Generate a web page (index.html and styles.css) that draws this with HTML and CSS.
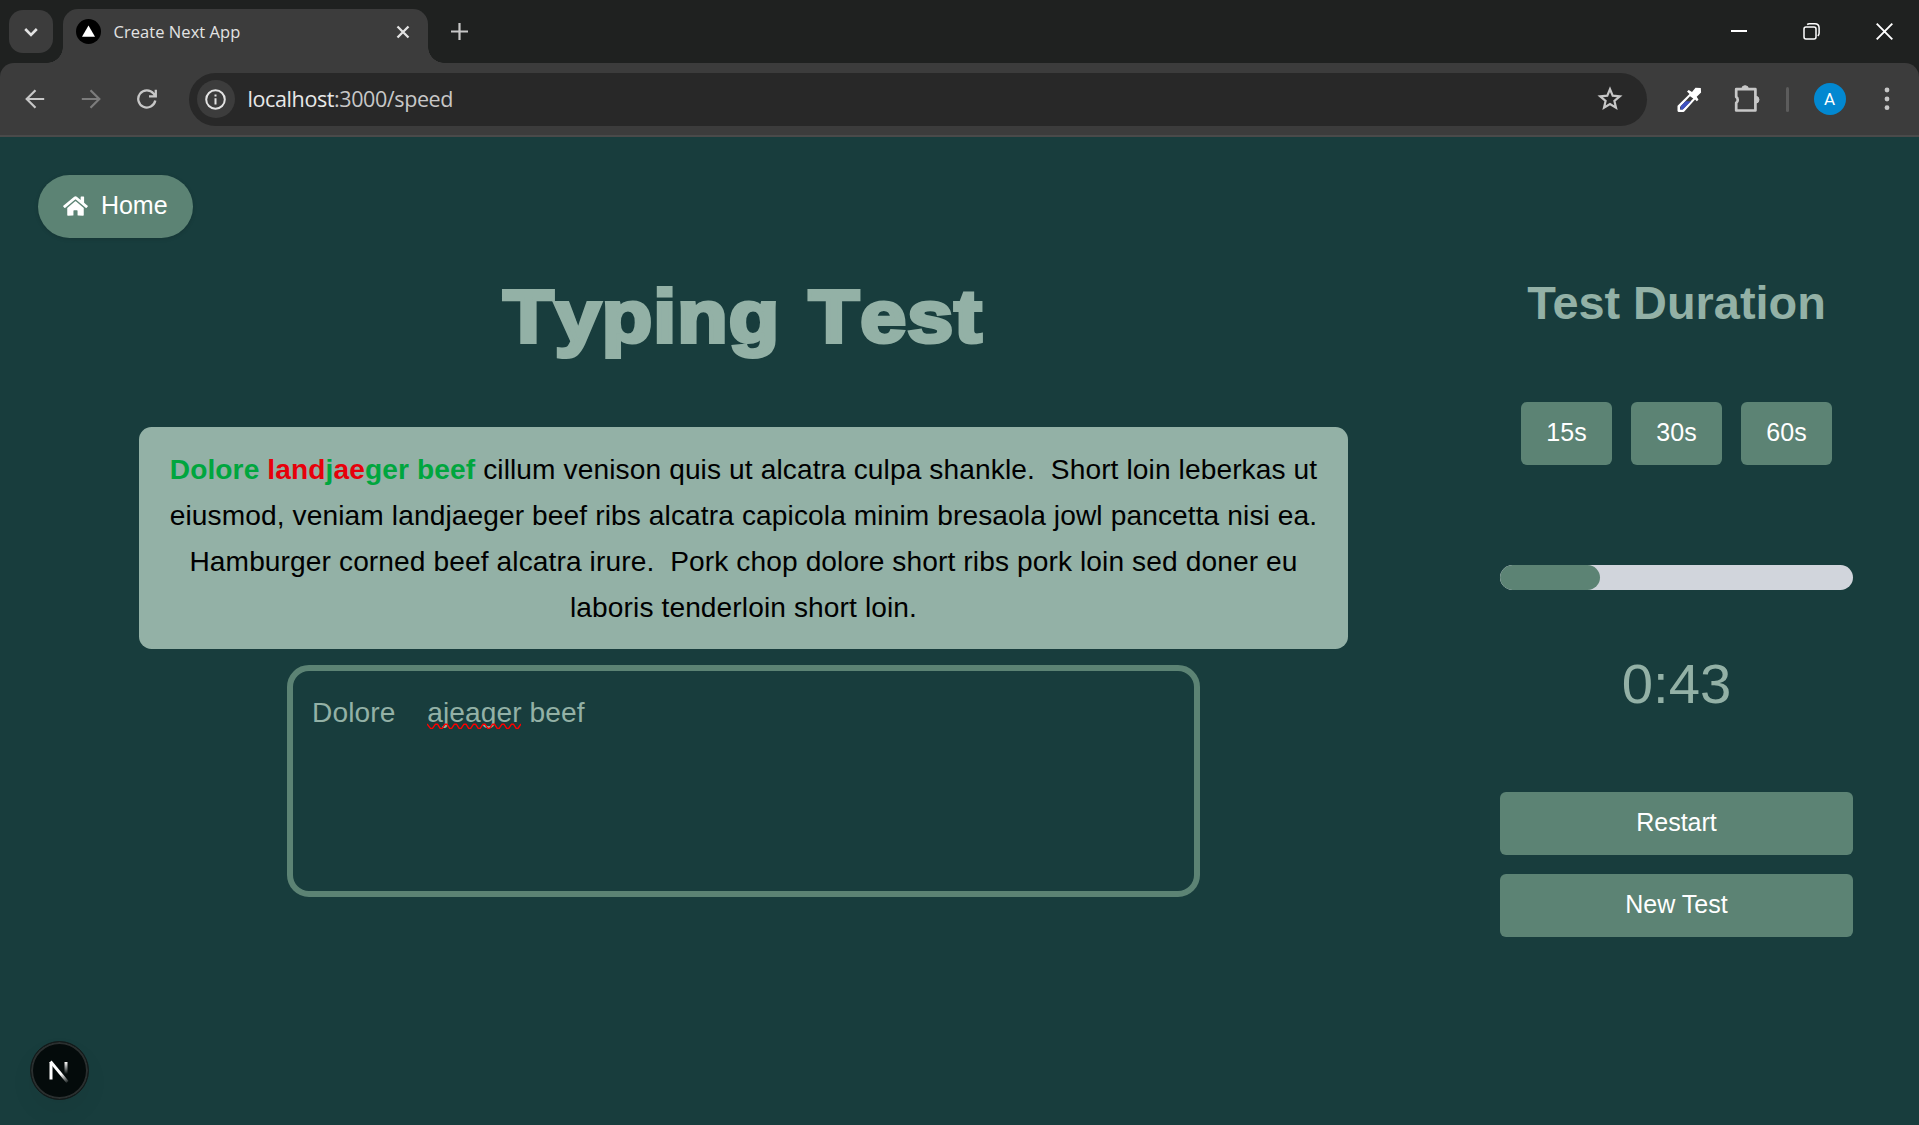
FILE: index.html
```html
<!DOCTYPE html>
<html lang="en">
<head>
<meta charset="utf-8">
<title>Create Next App</title>
<link rel="stylesheet" href="styles.css">
</head>
<body>
<header class="browser">
  <div class="tabstrip">
    <button class="tab-search" aria-label="Search tabs"><svg width="16" height="16" viewBox="0 0 16 16" fill="none" stroke="#e3e3e3" stroke-width="2.6"><path d="M2.2 5l5.8 5.8L13.800 5"/></svg></button>
    <div class="tab">
      <svg class="favicon" width="25" height="25" viewBox="0 0 25 25"><circle cx="12.500" cy="12.500" r="12.500" fill="#000"/><path d="M12.500 6.500l6.500 11.200H6z" fill="#fff"/></svg>
      <span class="tab-title">Create Next App</span>
      <svg width="14" height="14" viewBox="0 0 14 14" fill="none" stroke="#e3e3e3" stroke-width="2.300"><path d="M1.500 1.500l11 11M12.500 1.500l-11 11"/></svg>
    </div>
    <svg class="new-tab" width="17" height="17" viewBox="0 0 17 17" fill="none" stroke="#c7c7c7" stroke-width="2.200"><path d="M8.500 0v17M0 8.500h17"/></svg>
    <div class="window-controls">
      <svg width="16" height="16" viewBox="0 0 16 16"><path d="M0 7h16v2H0z" fill="#fff"/></svg>
      <svg width="17" height="17" viewBox="0 0 17 17" fill="none" stroke="#fff" stroke-width="1.500"><rect x="1" y="4" width="12" height="12" rx="2"/><path d="M4.200 1.600C4.800 1 5.500.8 6.500.8h5.300c2.700 0 4.300 1.600 4.300 4.300V10c0 1.300-.4 2.200-1.300 3"/></svg>
      <svg width="17" height="17" viewBox="0 0 17 17" fill="none" stroke="#fff" stroke-width="1.900"><path d="M.7.700l15.600 15.600M16.300.7L.7 16.300"/></svg>
    </div>
  </div>
  <div class="toolbar">
    <svg class="nav-icon" width="20" height="20" viewBox="0 0 20 20" fill="none" stroke="#c7c7c7" stroke-width="2.200"><path d="M19.200 10H2M10.500 1.200L1.700 10l8.800 8.800"/></svg>
    <svg class="nav-icon" width="20" height="20" viewBox="0 0 20 20" fill="none" stroke="#7c7c7c" stroke-width="2.200"><path d="M.8 10H18M9.500 1.200l8.800 8.800-8.800 8.800"/></svg>
    <svg class="nav-icon" width="20" height="20" viewBox="0 0 20 20" fill="none" stroke="#c7c7c7" stroke-width="2.300"><path d="M18.300 11.500A8.600 8.600 0 1 1 16.600 4.600L18.500 7M18.800.8V7.400H12"/></svg>
    <div class="address">
      <span class="site-info"><svg width="21" height="21" viewBox="0 0 21 21"><circle cx="10.500" cy="10.500" r="9.300" fill="none" stroke="#e3e3e3" stroke-width="2"/><path d="M9.500 9.300h2v6.200h-2zM9.500 5.500h2v2h-2z" fill="#e3e3e3"/></svg></span>
      <span class="url"><b>localhost</b>:3000/speed</span>
      <svg class="star" width="26" height="26" viewBox="0 0 26 26" fill="none" stroke="#c7c7c7" stroke-width="2.200"><path d="M13 3.200l2.700 6.500 7.100.6-5.400 4.600 1.600 6.900-6-3.700-6 3.700 1.600-6.900-5.400-4.600 7.100-.6z"/></svg>
    </div>
    <svg class="picker" width="26" height="27" viewBox="0 0 26 27"><path d="M14.500 8.500l4 4L7.500 24.800H2.600v-4.500z" fill="#fff" stroke="#fff" stroke-width="2.200" stroke-linejoin="round"/><path d="M14 10.200L4 21v2.500h2.600L17.300 12.500z" fill="#3c3c3c"/><path d="M5 19.800l4.700-4.600h5.300L6.800 23.500H4.200z" fill="#3d50c0"/><path d="M11 5.500l1.700-1.600 3.300 2 3.500-4.200L24.800 2l.3 4.500-4.400 4.300 1.800 2.900-1.700 1.600z" fill="#fff"/></svg>
    <svg class="puzzle" width="28" height="28" viewBox="0 0 28 28"><path d="M3.200 5.200H22.400V26.500H3.200v-7.600a3.700 3.700 0 0 0 0-6z" fill="none" stroke="#c7c7c7" stroke-width="2.700" stroke-linejoin="round"/><path d="M8.800 5a3.300 3.300 0 0 1 6.600 0zM22.500 12.200a3.500 3.500 0 0 1 0 7z" fill="#c7c7c7" stroke="#c7c7c7"/></svg>
    <span class="divider"></span>
    <span class="avatar">A</span>
    <svg class="menu" width="6" height="24" viewBox="0 0 6 24" fill="#c7c7c7"><circle cx="3" cy="3" r="2.400"/><circle cx="3" cy="12" r="2.400"/><circle cx="3" cy="20.700" r="2.400"/></svg>
  </div>
</header>
<main class="page">
  <a class="home"><svg width="25" height="22" viewBox="0 0 576 512" fill="#fff"><path d="M280.370 148.260L96 300.110V464a16 16 0 0 0 16 16l112.060-.29a16 16 0 0 0 15.920-16V368a16 16 0 0 1 16-16h64a16 16 0 0 1 16 16v95.640a16 16 0 0 0 16 16.050L464 480a16 16 0 0 0 16-16V300L295.670 148.260a12.190 12.190 0 0 0-15.300 0zM571.600 251.470L488 182.560V44.050a12 12 0 0 0-12-12h-56a12 12 0 0 0-12 12v72.610L318.470 43a48 48 0 0 0-61 0L4.340 251.470a12 12 0 0 0-1.600 16.900l25.500 31A12 12 0 0 0 45.150 301l235.220-193.740a12.190 12.190 0 0 1 15.300 0L530.900 301a12 12 0 0 0 16.900-1.600l25.500-31a12 12 0 0 0-1.700-16.930z"/></svg><span>Home</span></a>
  <div class="columns">
    <section class="test">
      <h1 class="title"><span>Typing</span> <span>Test</span></h1>
      <p class="passage"><b class="ok">Dolore </b><b class="bad">land</b><b class="ok">j</b><b class="bad">ae</b><b class="ok">ger beef</b> cillum venison quis ut alcatra culpa shankle.&nbsp; Short loin leberkas ut<br>eiusmod, veniam landjaeger beef ribs alcatra capicola minim bresaola jowl pancetta nisi ea.<br>Hamburger corned beef alcatra irure.&nbsp; Pork chop dolore short ribs pork loin sed doner eu<br>laboris tenderloin short loin.</p>
      <div class="entry">Dolore    <span class="misspelt">ajeager<svg width="94" height="7" viewBox="0 0 94 7" fill="none" stroke="#f00" stroke-width="1.400" stroke-linejoin="round"><path d="M0 1L3.500 5.400H5.500L8.500 1.200H10.500L13.200 5.400H15.200L18 1.200H20L22.700 5.400H24.700L27.500 1.200H29.500L32.200 5.400H34.200L37 1.200H39L41.700 5.400H43.700L46.500 1.200H48.500L51.200 5.400H53.200L56 1.200H58L60.700 5.400H62.700L65.500 1.200H67.500L70.200 5.400H72.200L75 1.200H77L79.700 5.400H81.700L84.500 1.200H86.500L89.200 5.400H91L94 1"/></svg></span> beef</div>
    </section>
    <aside class="panel">
      <h2 class="panel-title">Test Duration</h2>
      <div class="durations"><button class="btn">15s</button><button class="btn">30s</button><button class="btn">60s</button></div>
      <div class="progress"><div class="progress-fill" style="width:28.33%"></div></div>
      <div class="clock">0:43</div>
      <div class="actions"><button class="btn">Restart</button><button class="btn">New Test</button></div>
    </aside>
  </div>
  <div class="dev-badge"><svg width="22" height="26" viewBox="0 0 22 26" fill="none">
    <defs><linearGradient id="diag" gradientUnits="userSpaceOnUse" x1="11" y1="12" x2="20" y2="24"><stop offset=".3" stop-color="#fff"/><stop offset="1" stop-color="#fff" stop-opacity="0.100"/></linearGradient><linearGradient id="stem" gradientUnits="userSpaceOnUse" x1="0" y1="4" x2="0" y2="16"><stop offset="0" stop-color="#fff"/><stop offset="1" stop-color="#fff" stop-opacity="0"/></linearGradient></defs>
    <path d="M3 21.500V4" stroke="#fff" stroke-width="3"/><path d="M2.500 3.500L19.500 24" stroke="url(#diag)" stroke-width="2.800"/><path d="M18 4v12" stroke="url(#stem)" stroke-width="3"/></svg></div>
</main>
</body>
</html>
```
FILE: styles.css
```css
* { box-sizing: border-box; }
body {
  margin: 0;
  height: 1125px;
  display: flex;
  flex-direction: column;
  overflow: hidden;
  background: #183d3d;
  font-family: "Liberation Sans", Arial, sans-serif;
}
svg { display: block; flex: none; }
button { border: 0; padding: 0; font: inherit; }

/* browser frame */
.browser { height: 137px; background: #1f2120; font-family: "Open Sans", "Noto Sans", sans-serif; }
.tabstrip { height: 63px; display: flex; align-items: flex-start; padding-left: 9px; }
.tab-search {
  width: 44px; height: 43px; margin-top: 10px; border-radius: 14px;
  background: #3c3c3c; display: flex; align-items: center; justify-content: center;
}
.tab {
  position: relative;
  width: 365px; height: 54px; margin: 9px 0 0 10px; padding: 0 18px 9px 13px;
  border-radius: 15px 15px 0 0; background: #3c3c3c;
  display: flex; align-items: center;
}
.tab::before, .tab::after {
  content: ""; position: absolute; bottom: 0; width: 16px; height: 16px;
}
.tab::before { left: -16px; background: radial-gradient(circle at 0 0, transparent 15.500px, #3c3c3c 16px); }
.tab::after { right: -16px; background: radial-gradient(circle at 100% 0, transparent 15.500px, #3c3c3c 16px); }
.tab-title { flex: 1; margin-left: 12.500px; font-size: 16.500px; color: #e3e3e3; letter-spacing: .05px; }
.new-tab { margin: 23px 0 0 23px; }
.window-controls { margin: 23px 26px 0 auto; display: flex; gap: 56px; }
.toolbar {
  height: 74px; background: #3c3c3c; border-bottom: 2px solid #4a4a4a;
  border-radius: 14px 14px 0 0; display: flex; align-items: center; padding: 0 29px 0 25px;
}
.nav-icon { margin-right: 36.200px; }
.address {
  width: 1458px; height: 53px; margin-left: -5px; border-radius: 27px; background: #282828;
  display: flex; align-items: center; padding: 0 24px 0 8px;
}
.site-info {
  width: 38px; height: 38px; border-radius: 50%; background: #3c3c3c;
  display: flex; align-items: center; justify-content: center;
}
.url { flex: 1; margin: -2px 0 0 13px; font-size: 21.500px; letter-spacing: -.4px; color: #c7c7c7; }
.url b { font-weight: 400; color: #e8e8e8; }
.picker { margin-left: 29px; }
.puzzle { margin: -3px 0 0 31px; }
.divider { width: 3px; height: 25px; margin-left: 25px; border-radius: 2px; background: #5c5c5c; }
.avatar {
  width: 32px; height: 32px; margin-left: 25px; border-radius: 50%; background: #0288d1;
  color: #fff; font: 17px/32px Roboto, sans-serif; text-align: center;
}
.menu { margin-left: auto; }

/* typing page */
.page { position: relative; flex: 1; padding: 38px 66px 0 38px; }
.home {
  width: 155px; height: 63px; padding-bottom: 1px; border-radius: 32px; background: #5c8374;
  box-shadow: 0 1px 4px rgba(0, 0, 0, .14);
  display: flex; align-items: center; justify-content: center; gap: 12.500px;
  color: #fff; font-size: 25px; line-height: 37.500px;
}
.columns { display: flex; justify-content: space-between; }
.test { width: 1209px; margin-left: 101px; display: flex; flex-direction: column; align-items: center; }
.title {
  margin: 41px 0 0; height: 75px; display: flex; gap: 26px;
  font-size: 75px; line-height: 75px; font-weight: 700; color: #93b1a6;
  -webkit-text-stroke: 4px #93b1a6; letter-spacing: 1px; font-kerning: none;
  transform: scaleX(1.1);
}
.passage {
  width: 1209px; height: 222px; margin: 73px 0 0; padding: 20px 0 0;
  border-radius: 12.500px; background: #93b1a6; color: #000;
  font-size: 28.125px; line-height: 45.900px; letter-spacing: .11px; text-align: center; white-space: nowrap;
}
.ok { color: #00a63e; }
.bad { color: #e7000b; }
.entry {
  width: 913px; height: 232px; margin-top: 16px; padding: 20px 19px;
  border: 6px solid #5c8374; border-radius: 22px; color: #93b1a6;
  font-size: 28.125px; line-height: 44px; letter-spacing: .11px; white-space: pre;
}
.misspelt { position: relative; }
.misspelt svg { position: absolute; left: 0; top: 26px; }
.panel { width: 353px; display: flex; flex-direction: column; }
.panel-title { margin: 37px 0 0; font-size: 46.875px; line-height: 56px; color: #93b1a6; text-align: center; }
.durations { display: flex; justify-content: center; gap: 19px; margin-top: 71px; }
.durations .btn { width: 91px; }
.btn { height: 63px; padding-bottom: 3px; border-radius: 6px; background: #5c8374; color: #fff; font-size: 25px; line-height: 60px; }
.progress { height: 25px; margin-top: 100px; border-radius: 12.500px; overflow: hidden; background: #d1d5dc; }
.progress-fill { height: 100%; border-radius: 12.500px; background: #5c8374; }
.clock { margin-top: 62px; height: 63px; color: #93b1a6; font-size: 56.250px; line-height: 63px; text-align: center; }
.actions { margin-top: 77px; display: flex; flex-direction: column; gap: 19px; }
.dev-badge {
  position: absolute; left: 30px; bottom: 25px; width: 59px; height: 59px; border-radius: 50%;
  background: #040b0b; border: 1px solid #131a1a; box-shadow: inset 0 0 0 2px #2a2f2f, 0 12px 24px rgba(0, 0, 0, .05);
  display: flex; align-items: center; justify-content: center; padding-right: 2px;
}
```
